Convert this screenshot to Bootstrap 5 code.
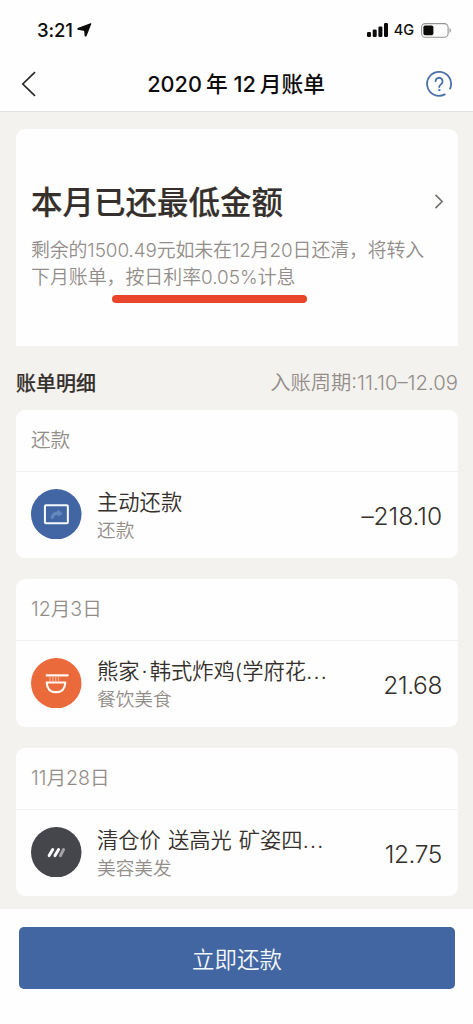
<!DOCTYPE html>
<html lang="zh-CN">
<head>
<meta charset="utf-8">
<meta name="viewport" content="width=device-width, initial-scale=1">
<title>2020年12月账单</title>
<link href="https://cdn.jsdelivr.net/npm/bootstrap@5.3.0/dist/css/bootstrap.min.css" rel="stylesheet">
<style>
  body { font-family: Inter, "Noto Sans CJK SC", sans-serif; color: #35302c; background: #fefefe; line-height: 1; }
  .phone { height: 1024px; overflow: hidden; white-space: nowrap; }
  .status { height: 60px; padding: 0 22px 0 37px; color: #0c0b0a; }
  .clock { font-size: 18.5px; font-weight: 550; letter-spacing: -.1px; }
  .net { font-size: 14.5px; font-weight: 450; margin: 1px 7px 0 6px; }
  .titlebar { height: 51px; padding: 0 20px 4px 21px; }
  .titlebar h1 { font-size: 21.7px; font-weight: 500; color: #0e0d0c; padding: 1px 0 0 10px; }
  .titlebar b { font-weight: 550; }
  .page-body { height: 798px; background: #f4f2ef; border-top: 1px solid #e2e1df; padding: 17px 15px 0 16px; }
  .panel { border: 0; border-radius: 9px; background: #fefefe; }
  .summary { height: 217px; border-radius: 9px 9px 0 0; padding: 55px 14px 0 15px; }
  .summary h2 { font-size: 31.5px; font-weight: 500; line-height: 38px; -webkit-text-stroke: .2px; }
  .note { font-size: 18.9px; line-height: 26.5px; color: #928d89; font-weight: 350; margin-top: 16px; }
  .note-a { letter-spacing: -.1px; }
  .marker { height: 7.5px; width: 195px; border-radius: 4px; background: #e8452b; margin: 4px 0 0 81px; }
  .section-head { height: 64px; padding-top: 11px; }
  .section-head h3 { font-size: 20px; font-weight: 500; -webkit-text-stroke: .2px; }
  .period { font-size: 20.3px; font-weight: 350; color: #928d89; }
  .panel-date { height: 62px; padding: 0 15px; border-bottom: 1px solid #f1f0ef; background: none; font-size: 19.6px; font-weight: 350; color: #928d89; }
  .entry { height: 86px; padding: 0 16px 2px 15px; }
  .entry-icon { width: 50.5px; height: 50.5px; flex: none; }
  .entry-text { margin-left: 15.5px; padding-top: 4px; }
  .entry-name { font-size: 21.3px; line-height: 30px; word-spacing: 1px; font-weight: 350; }
  .entry-name i { font-style: normal; margin: 0 2px; }
  .dots { letter-spacing: 1.3px; }
  .entry-kind { font-size: 18.7px; line-height: 28px; color: #928d89; font-weight: 350; }
  .amount { font-size: 24.5px; font-weight: 350; letter-spacing: -.4px; padding-top: 4px; }
  .amount.minus { letter-spacing: -.05px; }
  .pay, .pay:hover { height: 62px; border-radius: 5px; background: #4266a1; color: #f4f8fd; font-size: 22.5px; font-weight: 350; border: 0; padding: 4px 0 0; }
  .footer-bar { padding: 18px 18px 0 19px; }
</style>
</head>
<body>
<main class="phone">
  <div class="status d-flex align-items-center">
    <span class="clock">3:21</span>
    <svg class="ms-1" width="15" height="14" viewBox="0 0 15 14"><path d="M13.7.8 9 12.8H8.200L7.700 7.300 1 6.200V5.500z" fill="#0c0b0a" stroke="#0c0b0a" stroke-width="1.2" stroke-linejoin="round"/></svg>
    <svg class="ms-auto" width="21" height="14" viewBox="0 0 21 14" fill="#0c0b0a"><rect x="0" y="9" width="4" height="5" rx="1.2"/><rect x="5.7" y="6.5" width="4" height="7.5" rx="1.2"/><rect x="11.4" y="3.5" width="4" height="10.5" rx="1.2"/><rect x="17" y="0" width="4" height="14" rx="1.2"/></svg>
    <span class="net">4G</span>
    <svg width="30" height="15" viewBox="0 0 30 15"><rect x=".6" y=".6" width="26.5" height="13.6" rx="3.8" fill="none" stroke="#979491" stroke-width="1.1"/><rect x="2.4" y="2.5" width="10" height="9.8" rx="1.8" fill="#0c0b0a"/><path d="M28.5 5v5q1.4-.8 1.4-2.5T28.5 5z" fill="#979491"/></svg>
  </div>
  <header class="titlebar d-flex align-items-center justify-content-between">
    <svg width="16" height="26" viewBox="0 0 16 26" fill="none" stroke="#2c2a27" stroke-width="1.7"><path d="M14 1.2 1.8 13 14 24.8"/></svg>
    <h1 class="m-0"><b>2020</b><span class="ms-1">年</span> <b>12</b><span class="ms-1">月账单</span></h1>
    <svg width="28" height="28" viewBox="0 0 28 28" fill="none" stroke="#4a70a9" stroke-width="1.8" stroke-linecap="round"><path d="M19.8 24.4A12 12 0 1 1 25.1 18.6"/><path d="M10.6 11.2a3.5 3.5 0 1 1 5.8 2.7c-1.4 1.2-2.2 1.6-2.2 3.2"/><circle cx="14.2" cy="20.1" r=".8" fill="#4a70a9" stroke-width=".7"/></svg>
  </header>

  <div class="page-body">
    <section class="panel card summary">
      <div class="d-flex align-items-center justify-content-between">
        <h2 class="m-0">本月已还最低金额</h2>
        <svg class="mb-1" width="10" height="17" viewBox="0 0 10 17" fill="none" stroke="#77736f" stroke-width="1.7"><path d="m1.5 1.8 6.6 6.7-6.6 6.7"/></svg>
      </div>
      <div class="note"><div class="note-a">剩余的1500.49元如未在12月20日还清，将转入</div><div>下月账单，按日利率0.05%计息</div></div>
      <div class="marker"></div>
    </section>

    <div class="section-head d-flex justify-content-between align-items-center">
      <h3 class="m-0">账单明细</h3>
      <span class="period">入账周期:11.10–12.09</span>
    </div>

    <div class="d-grid" style="gap:21px">
      <section class="panel card">
        <div class="panel-date d-flex align-items-center">还款</div>
        <div class="entry d-flex align-items-center">
          <svg class="entry-icon" viewBox="0 0 50 50"><circle cx="25" cy="25" r="25" fill="#4166a3"/><rect x="13.8" y="16" width="22.7" height="18" rx="1" fill="none" stroke="#f5f8fc" stroke-width="2"/><path d="M19.500 29.500q0-7 7-7.500V20l5 4.500-5 3V25.800q-4 0-4.200 3.700z" fill="#6488be"/></svg>
          <div class="entry-text me-auto"><div class="entry-name">主动还款</div><div class="entry-kind">还款</div></div>
          <span class="amount minus">–218.10</span>
        </div>
      </section>
      <section class="panel card">
        <div class="panel-date d-flex align-items-center">12月3日</div>
        <div class="entry d-flex align-items-center">
          <svg class="entry-icon" viewBox="0 0 50 50"><circle cx="25" cy="25" r="25" fill="#eb6a3b"/><path d="M15.500 17.200H36.300" stroke="#fff8f2" stroke-width="2.300" stroke-linecap="round"/><path d="M18.800 18.500v4.500m2.800-4.500v4.500m2.800-4.500v4.500m2.800-4.500v4.500" stroke="#f5a888" stroke-width="1.300"/><path d="M15.500 24.200H34Q33.500 33.800 24.750 33.800T15.500 24.200z" fill="none" stroke="#fff8f2" stroke-width="2.100" stroke-linejoin="round"/></svg>
          <div class="entry-text me-auto"><div class="entry-name">熊家<i>·</i>韩式炸鸡(学府花<span class="dots">...</span></div><div class="entry-kind">餐饮美食</div></div>
          <span class="amount">21.68</span>
        </div>
      </section>
      <section class="panel card">
        <div class="panel-date d-flex align-items-center">11月28日</div>
        <div class="entry d-flex align-items-center">
          <svg class="entry-icon" viewBox="0 0 50 50"><circle cx="25" cy="25" r="25" fill="#45464b"/><g stroke-width="3" stroke-linecap="round"><path d="m18 28.300 3.500-6M23.800 28.300l3.500-6" stroke="#fafafa"/><path d="m29.200 28.300 3-6" stroke="#a3a3a6"/></g></svg>
          <div class="entry-text me-auto"><div class="entry-name">清仓价 送高光 矿姿四<span class="dots">...</span></div><div class="entry-kind">美容美发</div></div>
          <span class="amount">12.75</span>
        </div>
      </section>
    </div>
  </div>

  <footer class="footer-bar">
    <button type="button" class="btn pay w-100">立即还款</button>
  </footer>
</main>
<script src="https://cdn.jsdelivr.net/npm/bootstrap@5.3.0/dist/js/bootstrap.bundle.min.js"></script>
</body>
</html>
